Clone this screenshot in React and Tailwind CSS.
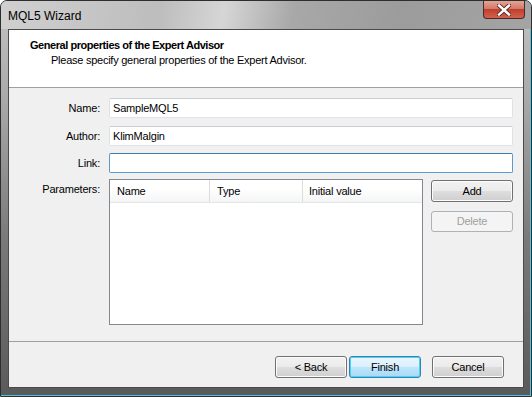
function Field({ label, value, focused }) {
    return (
        <div className="flex items-center">
            <div className="w-[91px] text-right">{label}</div>
            <div
                className={
                    focused
                        ? 'ml-[9px] flex-1 h-[20px] bg-white border border-[#5b9bd0] border-t-[#3d7bad] rounded-[2px] px-[3px] flex items-center'
                        : 'ml-[9px] flex-1 h-[20px] bg-white border border-[#dfe3e8] border-t-[#c9ced4] rounded-[2px] px-[3px] flex items-center'
                }
            >
                {value}
            </div>
        </div>
    )
}

function VistaButton({ children, primary, disabled, className }) {
    if (disabled) {
        return (
            <div className={`h-[21px] w-[82px] rounded-[3px] border border-[#adb2b5] bg-[#f4f4f4] text-[#a0a0a0] flex items-center justify-center ${className || ''}`}>
                {children}
            </div>
        )
    }
    return (
        <div
            className={
                primary
                    ? `h-[22px] w-[72px] rounded-[3px] border border-[#3c7fb1] bg-[linear-gradient(#eaf6fd_0%,#d9f0fc_50%,#bee6fd_51%,#a7d9f5_100%)] shadow-[inset_0_0_0_1px_#48d4f8] flex items-center justify-center ${className || ''}`
                    : `h-[22px] rounded-[3px] border border-[#707070] bg-[linear-gradient(#f2f2f2_0%,#ebebeb_50%,#dddddd_51%,#cfcfcf_100%)] shadow-[inset_0_0_0_1px_#fcfcfc] flex items-center justify-center ${className || ''}`
            }
        >
            {children}
        </div>
    )
}

export default function App() {
    return (
        <div className="w-[532px] h-[397px] font-['Liberation_Sans',Arial,sans-serif] text-[11px] tracking-[-0.2px] text-black">
            <div className="w-full h-full rounded-t-[7px] border border-[#2e2e2e] shadow-[inset_-1px_0_0_#4fc3e6,inset_0_-1px_0_#4fc3e6] bg-[linear-gradient(180deg,#c4c4c4_0%,#a9a9a9_25%,#7a7a7a_60%,#5a5a5a_100%)] flex flex-col overflow-hidden">
                {/* title bar */}
                <div className="h-[28px] flex items-start bg-[linear-gradient(100deg,#d0d0d0_0%,#bdbdbd_30%,#d6d6d6_42%,#a8a8a8_55%,#9c9c9c_75%,#a4a4a4_100%)]">
                    <div className="pl-[7px] pt-[6px] text-[12px] tracking-normal text-black">MQL5 Wizard</div>
                    <div className="ml-auto mr-[6px] w-[42px] h-[18px] rounded-b-[4px] border border-t-0 border-[#4a2a28] bg-[linear-gradient(#e4a494_0%,#d2796a_45%,#c0402c_50%,#d2614e_100%)] flex items-center justify-center">
                        <svg width="14" height="12" viewBox="0 0 14 12">
                            <path d="M2 1.5 L12 10.5 M12 1.5 L2 10.5" stroke="#5a2a24" strokeWidth="4.2" strokeLinecap="square" />
                            <path d="M2 1.5 L12 10.5 M12 1.5 L2 10.5" stroke="#ffffff" strokeWidth="2.4" strokeLinecap="square" />
                        </svg>
                    </div>
                </div>

                {/* client area */}
                <div className="mx-[7px] mb-[8px] flex-1 border border-[#4a4a4a] bg-[#f0f0f0] flex flex-col">
                    <div className="h-[58px] bg-white border-b border-[#a0a0a0] pl-[21px] pt-[8px]">
                        <div className="font-bold leading-[14px] tracking-[-0.45px]">General properties of the Expert Advisor</div>
                        <div className="pl-[21px] leading-[15px] mt-[1px] tracking-[-0.25px]">Please specify general properties of the Expert Advisor.</div>
                    </div>

                    <div className="pt-[10px] pr-[10px] flex flex-col">
                        <Field label="Name:" value="SampleMQL5" />
                        <div className="h-[8px]" />
                        <Field label="Author:" value="KlimMalgin" />
                        <div className="h-[7px]" />
                        <Field label="Link:" value="" focused />

                        <div className="flex mt-[6px]">
                            <div className="w-[91px] text-right pt-[2px]">Parameters:</div>
                            <div className="ml-[9px] w-[314px] h-[146px] bg-white border border-[#828790] flex flex-col">
                                <div className="h-[23px] flex border-b border-[#e5e5e5] bg-[linear-gradient(#ffffff_0%,#ffffff_40%,#f4f5f6_100%)]">
                                    <div className="w-[100px] pl-[7px] flex items-center border-r border-[#dcdcdc]">Name</div>
                                    <div className="w-[93px] pl-[7px] flex items-center border-r border-[#dcdcdc]">Type</div>
                                    <div className="flex-1 pl-[6px] flex items-center">Initial value</div>
                                </div>
                            </div>
                            <div className="ml-[8px] flex-1 flex flex-col pt-[1px]">
                                <VistaButton>Add</VistaButton>
                                <VistaButton disabled className="mt-[9px]">Delete</VistaButton>
                            </div>
                        </div>
                    </div>

                    <div className="mt-auto border-t border-[#a0a0a0] h-[46px] flex items-start pt-[14px] pr-[19px]">
                        <div className="ml-auto flex">
                            <VistaButton className="w-[72px]">&lt; Back</VistaButton>
                            <VistaButton primary className="ml-[2px]">Finish</VistaButton>
                            <VistaButton className="w-[72px] ml-[11px]">Cancel</VistaButton>
                        </div>
                    </div>
                </div>
            </div>
        </div>
    )
}
